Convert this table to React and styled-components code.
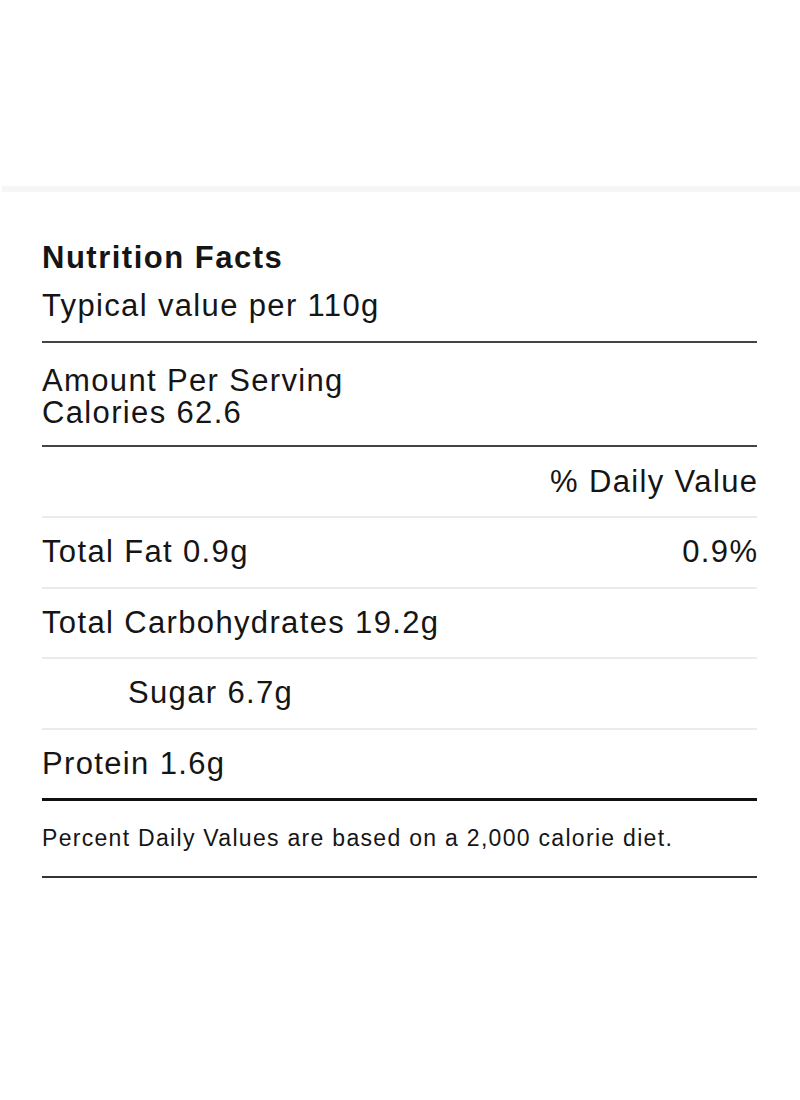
import React from 'react';
import styled, { createGlobalStyle } from 'styled-components';

const GlobalStyle = createGlobalStyle`
    body {
        margin: 0;
        background: #fff;
        font-family: "Liberation Sans", Arial, sans-serif;
        color: #151515;
    }
`;

const nutrients = [
    { label: 'Total Fat 0.9g', dv: '0.9%' },
    { label: 'Total Carbohydrates 19.2g' },
    { label: 'Sugar 6.7g', sub: true },
    { label: 'Protein 1.6g', last: true },
];

function App() {
    return (
        <Page>
            <GlobalStyle />
            <TopStrip />
            <Label>
                <Title>Nutrition Facts</Title>
                <Subtitle>Typical value per 110g</Subtitle>
                <Amount>
                    <div>Amount Per Serving</div>
                    <div>Calories 62.6</div>
                </Amount>
                <Row $head>
                    <span />
                    <span>% Daily Value</span>
                </Row>
                {nutrients.map((n) => (
                    <Row key={n.label} $last={n.last}>
                        <Name $sub={n.sub}>{n.label}</Name>
                        <span>{n.dv}</span>
                    </Row>
                ))}
                <Footnote>Percent Daily Values are based on a 2,000 calorie diet.</Footnote>
            </Label>
        </Page>
    );
}

export default App;

const Page = styled.div`
    width: 800px;
    min-height: 1100px;
    padding-top: 186px;
    box-sizing: border-box;
`

const TopStrip = styled.div`
    height: 6px;
    margin-left: 2px;
    background: #f6f6f6;
`

const Label = styled.div`
    padding: 42px 43px 0 42px;
    font-size: 31px;
    letter-spacing: 1.35px;
`

const Title = styled.div`
    font-weight: bold;
    line-height: 48px;
    letter-spacing: 1.5px;
`

const Subtitle = styled.div`
    line-height: 48px;
    padding-bottom: 11px;
    border-bottom: 2px solid #444;
`

const Amount = styled.div`
    line-height: 32px;
    padding: 22px 0 16px;
    border-bottom: 2px solid #444;
`

const Row = styled.div`
    display: flex;
    justify-content: space-between;
    align-items: center;
    height: ${(p) => (p.$head ? '69px' : '68.5px')};
    border-bottom: ${(p) => (p.$last ? '3px solid #111' : '2px solid #ebebeb')};

    span:last-child {
        margin-right: -1.35px;
    }
`

const Name = styled.span`
    padding-left: ${(p) => (p.$sub ? '86px' : '0')};
`

const Footnote = styled.div`
    font-size: 23px;
    letter-spacing: 1.3px;
    line-height: 75px;
    border-bottom: 2px solid #333;
`
